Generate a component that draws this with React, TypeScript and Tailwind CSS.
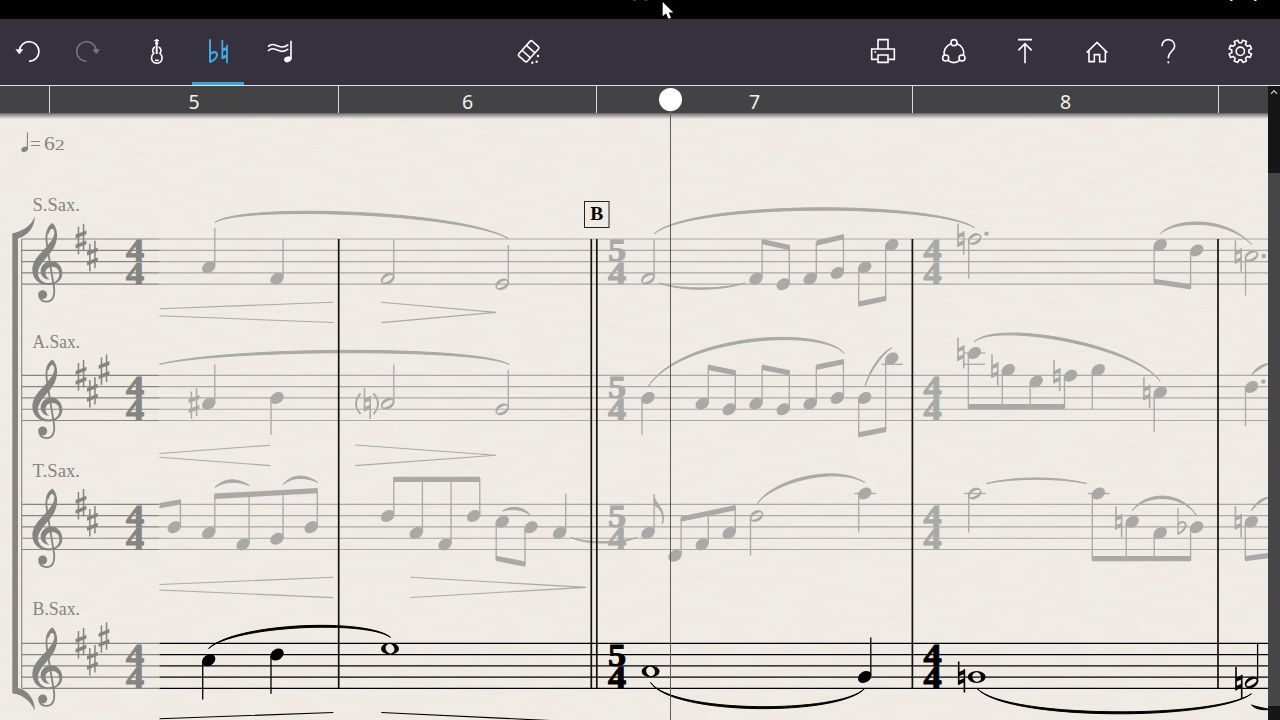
import type { ReactNode } from "react";

const DARK = "#848483";
const LIGHT = "#a9a9a8";
const BLACK = "#000000";

const SERIF = "'Liberation Serif', serif";

// top line of every staff, lines are GAP apart
const GAP = 11.28;
const staves = [
  { label: "S.Sax.", top: 239, baseline: 211, sharps: 2, color: LIGHT },
  { label: "A.Sax.", top: 375.4, baseline: 347.5, sharps: 3, color: LIGHT },
  { label: "T.Sax.", top: 504.4, baseline: 476.5, sharps: 2, color: LIGHT },
  { label: "B.Sax.", top: 643.3, baseline: 615, sharps: 3, color: BLACK },
];

type NoteKind = "q" | "h" | "w";
// x, y, end of the stem (0 = none), kind
type NoteData = [number, number, number, NoteKind?];

const lightNotes: NoteData[] = [
  // soprano
  [208.7, 267.3, 228],
  [277, 278.7, 239],
  [387.7, 278.7, 239.5, "h"],
  [502.2, 284.3, 245, "h"],
  [648, 278.7, 239.5, "h"],
  [756, 278.7, 240],
  [783.2, 284.3, 246],
  [810.2, 278.7, 242],
  [837.3, 273, 235],
  [864.7, 267.3, 305],
  [891.7, 245, 300],
  [974.7, 239, 278.5, "h"],
  [1160.2, 245, 283],
  [1196.6, 250.5, 288],
  [1251.5, 256, 295.5, "h"],
  // alto
  [208.7, 403.7, 364.5],
  [277, 398, 435],
  [387.7, 403.7, 364.5, "h"],
  [502.2, 409.3, 370, "h"],
  [648, 398, 435],
  [702.2, 403.7, 366],
  [729.2, 409.3, 371],
  [756, 403.7, 366],
  [783.2, 409.3, 371],
  [810.2, 403.7, 366],
  [837.3, 398, 361],
  [864.7, 398, 436],
  [891.7, 358.6, 430],
  [974.3, 353, 408],
  [1008.3, 370, 406],
  [1036.2, 381.5, 406],
  [1070.5, 375.7, 408],
  [1098.3, 370, 409.5],
  [1160.2, 392.5, 432],
  [1251.5, 387, 426],
  // tenor
  [174.3, 527.3, 501],
  [208.7, 533, 495],
  [243, 544.4, 493],
  [277, 538.7, 492],
  [311.2, 527.3, 490],
  [387.7, 516, 478],
  [416.3, 533, 478],
  [445, 544.4, 478],
  [473.7, 516, 478],
  [502.2, 521.7, 560],
  [531, 527.3, 565],
  [559.6, 533, 493.5],
  [648, 533, 494],
  [675, 555.7, 518],
  [702.2, 544.4, 512],
  [729.2, 533, 507],
  [756.5, 516, 555.5, "h"],
  [864.7, 493.5, 532.5],
  [974.7, 493.5, 532.5, "h"],
  [1098.3, 493.5, 560],
  [1132.2, 521.7, 558],
  [1160.2, 533, 558],
  [1196.6, 527.3, 560],
  [1251.3, 521.7, 560],
];

const blackNotes: NoteData[] = [
  [208.7, 660.2, 699.5],
  [277, 654.6, 693.7],
  [390, 648.7, 0, "w"],
  [650.6, 671.3, 0, "w"],
  [864.7, 677, 637.5],
  [976.7, 677, 0, "w"],
  [1251.5, 682.5, 643.5, "h"],
];

// x1, top1, x2, top2
const beams = [
  [762, 239, 790, 245],
  [816.3, 240.5, 844, 234],
  [858.3, 301.5, 886.2, 295.8],
  [1154, 278.8, 1191, 284.3],
  [708, 364.6, 735.7, 370.2],
  [762, 364.6, 790, 370.2],
  [816.3, 364.6, 844, 359],
  [858.3, 432.3, 886.2, 426.7],
  [968, 404, 1064.7, 404],
  [159.5, 503, 181, 499.3],
  [214.3, 493.6, 317.6, 488],
  [393.3, 476.8, 480, 476.8],
  [496.2, 555.8, 525.3, 561.5],
  [680.8, 516.5, 735.7, 505],
  [1092, 556, 1191, 556],
  [1245, 556, 1270, 552.8],
];

const lightSlurs = [
  [215, 222.4, 240, 204.5, 460, 211, 508.5, 238.5],
  [654.3, 233.7, 690, 201.8, 935, 201.8, 974.5, 227.7],
  [1160.3, 233.7, 1173, 220, 1225, 216, 1251.7, 244.5],
  [159.5, 364.3, 230, 347.5, 480, 347, 509, 364.5],
  [648.2, 386.7, 680, 336, 820, 326, 844.3, 353.3],
  [865, 386.7, 869, 372, 880, 355, 892, 347.5],
  [974.3, 342, 995, 320.5, 1135, 345, 1160.3, 381.5],
  [1251.5, 375.5, 1255, 370, 1261, 366, 1270, 363],
  [215, 487.5, 224, 479.5, 237, 479, 249.5, 485.7],
  [283.2, 484.3, 292, 475.5, 305, 475, 317.7, 482.3],
  [502.4, 511, 512, 506.5, 524, 508, 530.5, 515.5],
  [757, 504.3, 770, 482, 835, 464, 865, 482.6],
  [1132, 511, 1145, 493, 1180, 491, 1196.5, 515.3],
  [1251.3, 511, 1255, 504, 1262, 499, 1270, 497],
];

const lightTies = [
  [659.5, 283, 680, 290.5, 720, 290.5, 745, 283],
  [570.8, 537.5, 585, 544, 620, 544, 637, 537.5],
  [986.3, 483.5, 1015, 477, 1058, 477, 1086.8, 483.5],
];

const blackSlurs = [
  [208.5, 648.5, 235, 624, 367, 619, 390.5, 637.3],
  [650.4, 682.3, 672, 715, 840, 715, 864.7, 688.5],
  [977, 688.3, 1005, 720, 1215, 720, 1251.5, 693.8],
  [1251.5, 705, 1256, 708, 1262, 709, 1270, 709.5],
];

const hairpins = [
  "M159.5 308.7L333.3 302.3M159.5 315.8L333.3 322.5",
  "M381.3 302.3L496 312.4L381.3 322.6",
  "M159.5 453.5L270.3 445.2M159.5 457.2L270.3 465.6",
  "M355.3 445L496 455.3L355.3 465.6",
  "M159.5 584.5L333.3 577.3M159.5 590L333.3 597.6",
  "M410.3 577.3L586 587.4L410.3 597.5",
];

const naturals = [
  [960.8, 239],
  [1238.2, 256],
  [367.3, 403.7],
  [960.8, 353],
  [994.8, 370],
  [1056.8, 375.7],
  [1146.7, 392.5],
  [1118.7, 521.7],
  [1238.2, 521.7],
];

const ledgers = [
  [881.7, 902.8, 364.3],
  [963.5, 985.3, 353],
  [963.5, 985.3, 364.3],
  [854.5, 875.7, 493.5],
  [964.3, 985.7, 493.5],
  [1088, 1109.3, 493.5],
];

function Note({ data, color }: { data: NoteData; color: string }) {
  const [x, y, stem, kind = "q"] = data;
  const up = stem < y;
  const sx = up ? x + 6.1 : x - 6;
  return (
    <g fill={color}>
      {kind === "q" && (
        <ellipse cx={x} cy={y} rx="7.2" ry="5.4" transform={`rotate(-33 ${x} ${y})`} />
      )}
      {kind === "h" && (
        <path
          fillRule="evenodd"
          transform={`translate(${x} ${y}) rotate(-31)`}
          d="M-7.3 0A7.3 5.3 0 1 1 7.3 0A7.3 5.3 0 1 1 -7.3 0ZM-5.8 0.3A5.8 2.4 0 1 0 5.8 -0.3A5.8 2.4 0 1 0 -5.8 0.3Z"
        />
      )}
      {kind === "w" && (
        <path
          fillRule="evenodd"
          transform={`translate(${x} ${y})`}
          d="M-9 0A9 5.9 0 1 1 9 0A9 5.9 0 1 1 -9 0ZM-2.4 -4.1A4.8 3.7 60 1 0 2.4 4.1A4.8 3.7 60 1 0 -2.4 -4.1Z"
        />
      )}
      {stem > 0 && (
        <line x1={sx} x2={sx} y1={up ? y - 1.5 : y + 1.5} y2={stem} stroke={color} strokeWidth="1.3" />
      )}
    </g>
  );
}

function Slur({ p, color, weight = 1.6 }: { p: number[]; color: string; weight?: number }) {
  const [x0, y0, ax, ay, bx, by, x1, y1] = p;
  const d = weight;
  return (
    <path
      d={`M${x0} ${y0}C${ax} ${ay - d} ${bx} ${by - d} ${x1} ${y1}C${bx} ${by + d} ${ax} ${ay + d} ${x0} ${y0}Z`}
      fill={color}
      stroke={color}
      strokeWidth="1"
      strokeLinejoin="round"
    />
  );
}

function Sharp({ x, y, color }: { x: number; y: number; color: string }) {
  return (
    <g transform={`translate(${x} ${y})`} fill={color}>
      <path d="M-3.3 -12.3h1.5v27.5h-1.5zM1.8 -15.3h1.5v27.5h-1.5z" />
      <path d="M-5.4 -4.4L5.4 -8.6V-4.8L-5.4 -0.6ZM-5.4 5.6L5.4 1.4V5.2L-5.4 9.4Z" />
    </g>
  );
}

function Natural({ x, y, color }: { x: number; y: number; color: string }) {
  return (
    <g transform={`translate(${x} ${y})`} fill={color}>
      <path d="M-3.6 -15.4h1.6v23.2h-1.6zM2.1 -7.8h1.6v23.2h-1.6z" />
      <path d="M-3.2 -4.8L3.4 -7.6V-3.4L-3.2 -0.6ZM-3.2 3.7L3.4 0.9V5.1L-3.2 7.9Z" />
    </g>
  );
}

function TrebleClef({ top }: { top: number }) {
  return (
    <g transform={`translate(0 ${top - 119}) scale(0.3333)`} fill={DARK}>
      <path d="M157 309C168 318 173 338 171 352C168 387 145 405 130 424C117 441 111 454 115 467C120 483 134 489 146 489C166 489 178 479 178 462C178 448 168 439 155 440C142 441 134 452 137 463C139 471 143 475 149 478C134 480 121 467 122 452C123 434 139 423 155 423C173 423 187 440 187 460C187 482 168 495 145 495C115 495 96 474 97 447C99 419 120 402 136 384C152 366 163 352 163 338C163 330 160 326 156 326C152 326 148 333 146 342L141 335C144 322 149 314 157 309Z" />
      <path
        d="M153 316C140 328 137 350 141 374L162 503C166 532 155 545 140 545C130 545 121 540 118 530"
        fill="none"
        stroke={DARK}
        strokeWidth="5.5"
      />
      <circle cx="128" cy="524" r="13.5" />
    </g>
  );
}

function TimeSignature({ x, top, upper, lower, color }: { x: number; top: number; upper: string; lower: string; color: string }) {
  return (
    <g
      transform={`translate(${x} ${top}) scale(1.12 1)`}
      fill={color}
      stroke={color}
      strokeWidth="1"
      textAnchor="middle"
      fontFamily={SERIF}
      fontWeight="700"
      fontSize="32.5"
    >
      <text y="22.2">{upper}</text>
      <text y="44.8">{lower}</text>
    </g>
  );
}

function Score() {
  return (
    <svg viewBox="0 113 1268 607" className="block h-full w-full">
      <defs>
        <filter id="grain" x="0" y="0" width="100%" height="100%">
          <feTurbulence type="fractalNoise" baseFrequency="0.025 0.2" numOctaves="3" seed="4" />
          <feColorMatrix values="0 0 0 0 0.9  0 0 0 0 0.72  0 0 0 0 0.66  1.2 0 0 0 -0.46" />
        </filter>
        <linearGradient id="fade" x1="0" y1="0" x2="0" y2="1">
          <stop offset="0" stopColor="#3c3c3c" stopOpacity="0.75" />
          <stop offset="1" stopColor="#3c3c3c" stopOpacity="0" />
        </linearGradient>
      </defs>
      <rect y="113" width="1268" height="607" filter="url(#grain)" opacity="0.5" />
      <rect y="113" width="1268" height="6" fill="url(#fade)" />

      {/* tempo */}
      <g fill={DARK} fontFamily={SERIF}>
        <ellipse cx="24.7" cy="149.3" rx="3.5" ry="2.5" transform="rotate(-28 24.7 149.3)" />
        <path d="M26.9 132.5h1.1v16.5h-1.1z" />
        <text x="30" y="150.3" fontSize="19">=</text>
        <text x="44" y="150.3" fontSize="19.5" textLength="10.8" lengthAdjust="spacingAndGlyphs">6</text>
        <text x="54.8" y="150.3" fontSize="14.5" textLength="10" lengthAdjust="spacingAndGlyphs">2</text>
      </g>

      {/* bracket */}
      <path d="M12.3 233.5C22 231 31 227 34.6 216.5C35.5 226 28 236 18 238.5V688C28 690 35.5 700 34.6 710.5C31 701 22 694.5 12.3 693.3Z" fill={DARK} />
      <line x1="21.7" x2="21.7" y1="239" y2="688.3" stroke={DARK} strokeWidth="1.1" />

      {staves.map(({ label, top, baseline, sharps, color }) => (
        <g key={label}>
          {[0, 1, 2, 3, 4].map((i) => (
            <g key={i} strokeWidth="1.2">
              <line x1="21.7" x2="159.5" y1={top + i * GAP} y2={top + i * GAP} stroke={DARK} />
              <line x1="159.5" x2="1268" y1={top + i * GAP} y2={top + i * GAP} stroke={color} />
            </g>
          ))}
          <text x="32.5" y={baseline} fontFamily={SERIF} fontSize="19" textLength="47.5" lengthAdjust="spacingAndGlyphs" fill={DARK}>
            {label}
          </text>
          <TrebleClef top={top} />
          <Sharp x={81} y={top} color={DARK} />
          <Sharp x={92.4} y={top + 17} color={DARK} />
          {sharps === 3 && <Sharp x={104} y={top - 5.7} color={DARK} />}
          <TimeSignature x={135} top={top} upper="4" lower="4" color={DARK} />
          <TimeSignature x={617} top={top} upper="5" lower="4" color={color} />
          <TimeSignature x={932.7} top={top} upper="4" lower="4" color={color} />
        </g>
      ))}

      {lightNotes.map((n) => (
        <Note key={`${n[0]}-${n[1]}`} data={n} color={LIGHT} />
      ))}
      {beams.map(([x1, y1, x2, y2]) => (
        <path key={`${x1}-${y1}`} d={`M${x1} ${y1}L${x2} ${y2}v5.3L${x1} ${y1 + 5.3}Z`} fill={LIGHT} />
      ))}
      {ledgers.map(([x1, x2, y]) => (
        <line key={`${x1}-${y}`} x1={x1} x2={x2} y1={y} y2={y} stroke={LIGHT} strokeWidth="1.3" />
      ))}
      {lightSlurs.map((p) => (
        <Slur key={`${p[0]}-${p[1]}`} p={p} color={LIGHT} />
      ))}
      {lightTies.map((p) => (
        <Slur key={`${p[0]}-${p[1]}`} p={p} color={LIGHT} weight={0.9} />
      ))}
      {hairpins.map((d) => (
        <path key={d} d={d} fill="none" stroke={LIGHT} strokeWidth="1.1" />
      ))}
      {naturals.map(([x, y]) => (
        <Natural key={`${x}-${y}`} x={x} y={y} color={LIGHT} />
      ))}
      <Sharp x={194} y={403.7} color={LIGHT} />
      <g fill="none" stroke={LIGHT} strokeWidth="1.9">
        <path d="M360.5 393.5Q351.5 403.7 360.5 414M373.5 393.5Q382.5 403.7 373.5 414" />
        {/* flat */}
        <path d="M1178 507.7V534.5" strokeWidth="1.3" />
        <path d="M1178 525C1181 520.5 1186.5 521.5 1185.7 526C1185 530 1181 532 1178 534.3" strokeWidth="2" />
      </g>
      {/* flag of the eighth note */}
      <path d="M653.8 493.5C655.5 504 664 507 664 518C664 520.5 663.6 522 662.8 524.3L661.6 523.8C664 514 659 507.5 653.8 505.5Z" fill={LIGHT} />
      <g fill={LIGHT}>
        <circle cx="986.5" cy="233.6" r="2.2" />
        <circle cx="1263.7" cy="256" r="2.2" />
        <circle cx="1263.3" cy="381.5" r="2.2" />
      </g>

      {blackNotes.map((n) => (
        <Note key={n[0]} data={n} color={BLACK} />
      ))}
      {blackSlurs.map((p) => (
        <Slur key={p[0]} p={p} color={BLACK} weight={1.3} />
      ))}
      <Natural x={961.5} y={677} color={BLACK} />
      <Natural x={1238.8} y={682.5} color={BLACK} />
      <path d="M159.5 718.7L333.3 712.5M381.3 712.5L560 721" stroke={BLACK} strokeWidth="1.1" />

      {/* bar lines */}
      <g stroke="#111111" strokeWidth="1.7">
        {[338.7, 591.3, 596.8, 912.4, 1218].map((x) => (
          <line key={x} x1={x} x2={x} y1="239" y2="688.3" />
        ))}
      </g>

      {/* rehearsal mark */}
      <rect x="584.5" y="201.5" width="24.5" height="26" fill="none" stroke="#222222" />
      <text x="596.8" y="220.4" textAnchor="middle" fontFamily={SERIF} fontSize="19.5" fontWeight="700" fill="#000">
        B
      </text>

      <line x1="670.5" x2="670.5" y1="113" y2="720" stroke="#5c5c5c" strokeWidth="1" />
    </svg>
  );
}

function Icon({ x, children }: { x: number; children: ReactNode }) {
  return (
    <svg
      viewBox={`${x} 120 72 72`}
      className="h-6 w-6 overflow-visible"
      fill="none"
      stroke="currentColor"
      strokeWidth="4.8"
    >
      {children}
    </svg>
  );
}

function ToolButton({ className, children }: { className: string; children: ReactNode }) {
  return (
    <button className={`flex h-full shrink-0 items-center justify-center ${className}`}>
      {children}
    </button>
  );
}

function gearPath(cx: number, cy: number) {
  const pts: string[] = [];
  const teeth = 8;
  for (let i = 0; i < teeth; i++) {
    const a = ((i + 0.5) / teeth) * Math.PI * 2;
    for (const [off, r] of [[-0.24, 26], [-0.17, 34.5], [0.17, 34.5], [0.24, 26]]) {
      pts.push(`${(cx + Math.cos(a + off) * r).toFixed(1)} ${(cy + Math.sin(a + off) * r).toFixed(1)}`);
    }
  }
  return `M${pts.join("L")}Z`;
}

function Toolbar() {
  return (
    <div className="flex h-[67px] shrink-0 items-center border-b border-[#e4e3e6] bg-[#36313f] text-white">
      <ToolButton className="w-14">
        <Icon x={48}>
          <path d="M58 152A29.5 29.5 0 1 1 87 184" />
          <path d="M46 148H70L58 163Z" fill="currentColor" stroke="none" />
        </Icon>
      </ToolButton>
      <ToolButton className="w-16 text-[#77737e]">
        <Icon x={228}>
          <path d="M289 152A29.5 29.5 0 1 0 260 184" />
          <path d="M277 148H300L289 163Z" fill="currentColor" stroke="none" />
        </Icon>
      </ToolButton>
      <ToolButton className="w-[72px]">
        <Icon x={432}>
          <path d="M470 117V162" strokeWidth="6" />
          <path d="M463 122H477M465 130H475" strokeWidth="4" />
          <path d="M465 141C456 145 457 155 461 160C452 167 453 182 461 187C466 190 475 190 480 187C488 182 489 167 480 160C484 155 485 145 476 141" />
          <path d="M465 181H476" />
        </Icon>
      </ToolButton>
      <ToolButton className="w-[52px] border-b-[3px] border-[#3aa3da] pt-[3px] text-[#41a9e0]">
        <Icon x={618}>
          <path d="M630 118V188" strokeWidth="6" />
          <path d="M630 164C637 153 652 154 651 165C650 176 637 183 630 186" strokeWidth="6.5" />
          <path d="M667 120V177M681 134V190" strokeWidth="5.5" />
          <path d="M667 150L681 145M667 173L681 168" strokeWidth="9" />
        </Icon>
      </ToolButton>
      <ToolButton className="w-[72px]">
        <Icon x={804}>
          <path d="M804 140C814 130 823 133 834 138S855 142 865 134M804 153C814 143 823 146 834 151S855 155 865 147" />
          <path d="M873 122V178" />
          <ellipse cx="863" cy="178" rx="11" ry="8.5" transform="rotate(-20 863 178)" fill="currentColor" stroke="none" />
        </Icon>
      </ToolButton>
      <ToolButton className="ml-[183px] w-[60px]">
        <Icon x={51}>
          <g transform="translate(86 154) rotate(-48)">
            <rect x="-30" y="-17" width="60" height="34" rx="5" />
            <path d="M-11 -17V17M9 -17V17" />
          </g>
          <g fill="currentColor" stroke="none">
            <circle cx="114" cy="168" r="3.6" />
            <circle cx="97" cy="188" r="3.6" />
            <circle cx="110" cy="185" r="3.6" />
          </g>
        </Icon>
      </ToolButton>
      <div className="mr-1 ml-auto flex h-full">
        <ToolButton className="w-[71.5px]">
          <Icon x={92}>
            <path d="M113 147V119H143V147M113 178H94V147H162V178H143" />
            <path d="M113 165H143V187H113Z" />
            <circle cx="105" cy="156" r="2.8" fill="currentColor" stroke="none" />
          </Icon>
        </ToolButton>
        <ToolButton className="w-[71.5px]">
          <Icon x={307}>
            <circle cx="343" cy="128" r="9" />
            <circle cx="318" cy="174" r="9" />
            <circle cx="367" cy="174" r="9" />
            <path d="M334 131C318 137 311 152 314 166M352 131C368 137 375 152 371 166M325 181C335 190 350 190 360 181" />
          </Icon>
        </ToolButton>
        <ToolButton className="w-[71.5px]">
          <Icon x={523}>
            <path d="M535 119H577M556 190V131M536 151L556 131L576 151" />
          </Icon>
        </ToolButton>
        <ToolButton className="w-[71.5px]">
          <Icon x={736}>
            <path d="M741 158L772 127L803 158M748 153V185H764V164H780V185H797V153" />
          </Icon>
        </ToolButton>
        <ToolButton className="w-[71.5px]">
          <Icon x={951}>
            <path d="M966 139C965 112 1004 113 1004 138C1004 153 985 154 985 175" />
            <circle cx="985" cy="187" r="3.2" fill="currentColor" stroke="none" />
          </Icon>
        </ToolButton>
        <ToolButton className="w-[71.5px]">
          <Icon x={1164}>
            <path d={gearPath(1201, 154)} strokeLinejoin="round" />
            <circle cx="1201" cy="154" r="12.5" />
          </Icon>
        </ToolButton>
      </div>
    </div>
  );
}

function Ruler() {
  const cell = "flex h-full items-center justify-center border-r border-[#dadada] pt-[5px]";
  return (
    <div className="relative flex h-[27px] shrink-0 bg-[#434345] font-['Noto_Sans',sans-serif] text-[19.5px] leading-none text-[#f2f2f2]">
      <div className={`${cell} w-[50px]`} />
      <div className={`${cell} w-[289px]`}>5</div>
      <div className={`${cell} w-[258px]`}>6</div>
      <div className={`${cell} w-[316px]`}>7</div>
      <div className={`${cell} w-[306px]`}>8</div>
      <div className="absolute top-0.5 left-[659px] h-[23px] w-[23px] rounded-full bg-white" />
      <div className="absolute top-[25px] left-[670px] h-0.5 w-px bg-[#888]" />
    </div>
  );
}

export default function App() {
  return (
    <div className="flex h-screen w-full flex-col overflow-hidden bg-black">
      <div className="relative h-[19px] shrink-0 bg-black">
        <svg viewBox="0 0 1280 19" className="absolute inset-0 h-full w-full">
          <path d="M633 0h3v1h-3zM644.5 0h3v1h-3z" fill="#24475e" />
          <path d="M1230 0h2.5v1h-2.5zM1254 0h2.5v1h-2.5z" fill="#ddd" />
          <path d="M662.7 2V16.3L666 13.3L668.5 18.8L671 17.7L668.7 12.6H673.3Z" fill="#fff" />
        </svg>
      </div>
      <Toolbar />
      <div className="flex min-h-0 flex-1">
        <main className="flex w-[1268px] flex-col bg-[#efece6]">
          <Ruler />
          <div className="min-h-0 flex-1">
            <Score />
          </div>
        </main>
        <aside className="flex w-3 flex-col bg-[#161616]">
          <div className="flex h-[87px] justify-center pt-[3px]">
            <svg viewBox="0 0 8 6" className="h-1.5 w-2" fill="none" stroke="#d0d0d0" strokeWidth="1.2">
              <path d="M1 4.8L4 1.6L7 4.8" />
            </svg>
          </div>
          <div className="h-[533px] bg-[#464646]" />
        </aside>
      </div>
    </div>
  );
}
